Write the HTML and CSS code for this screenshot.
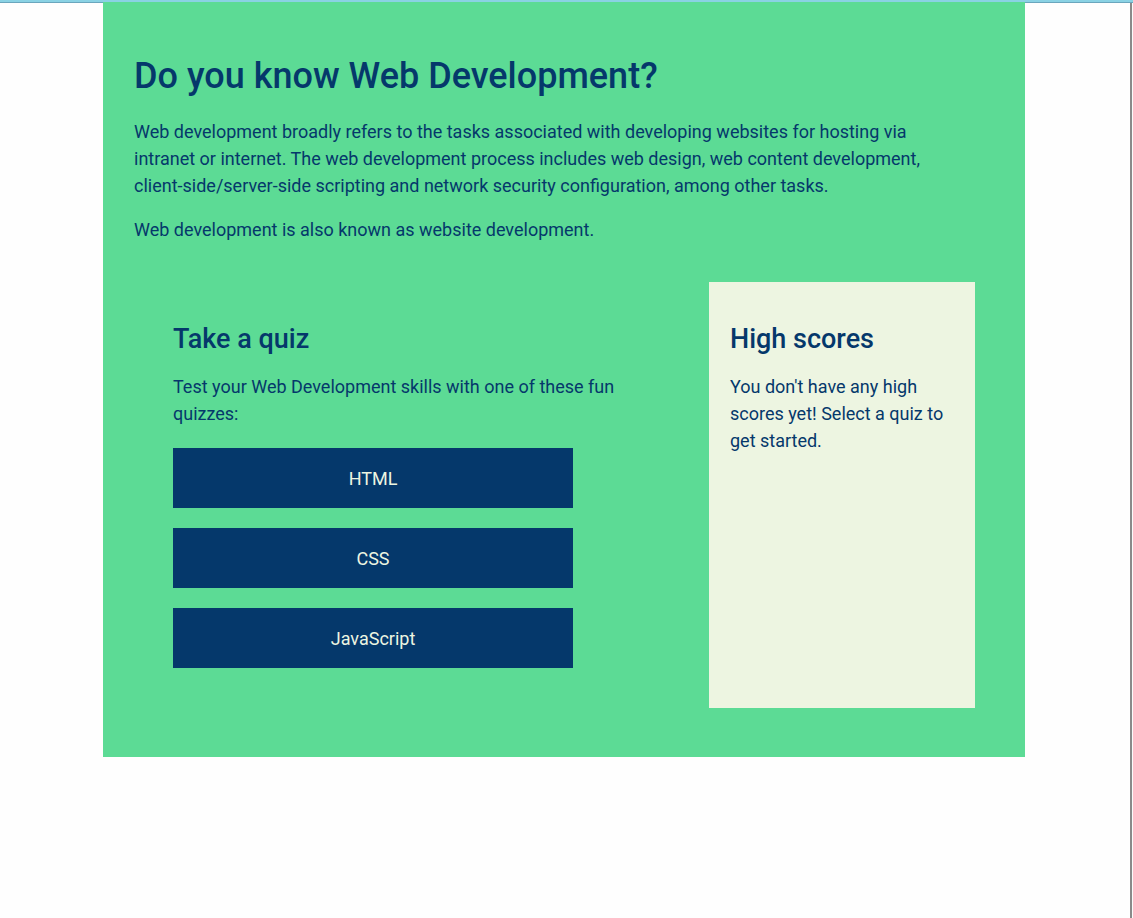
FILE: index.html
```html
<!DOCTYPE html>
<html lang="en">
<head>
<meta charset="utf-8">
<title>Do you know Web Development?</title>
<link rel="stylesheet" href="styles.css">
</head>
<body>
<div class="topbar"></div>
<div class="frame">
  <div class="viewport">
    <main class="card">
      <h1 class="title">Do you know Web Development?</h1>
      <p class="text intro">Web development broadly refers to the tasks associated with developing websites for hosting via intranet or internet. The web development process includes web design, web content development, client-side/server-side scripting and network security configuration, among other tasks.</p>
      <p class="text intro">Web development is also known as website development.</p>
      <div class="split">
        <section class="quiz">
          <h2 class="subtitle">Take a quiz</h2>
          <p class="text">Test your Web Development skills with one of these fun quizzes:</p>
          <div class="buttons">
            <button class="btn">HTML</button>
            <button class="btn">CSS</button>
            <button class="btn">JavaScript</button>
          </div>
        </section>
        <aside class="scores">
          <h2 class="subtitle">High scores</h2>
          <p class="text">You don't have any high scores yet! Select a quiz to get started.</p>
        </aside>
      </div>
    </main>
  </div>
  <div class="edge"></div>
</div>
</body>
</html>
```

FILE: styles.css
```css
* { box-sizing: border-box; }
html, body { margin: 0; padding: 0; background: #ffffff; }
body {
  font-family: Roboto, "Liberation Sans", sans-serif;
  color: #05386b;
  height: 918px;
  overflow: hidden;
}
.topbar {
  height: 3px;
  background: #8ad2e4;
  border-bottom: 1px solid #6aa6bd;
}
.frame {
  display: flex;
  height: 915px;
}
.viewport {
  width: 1130px;
  background: #fefefe;
}
.edge {
  width: 3px;
  border-left: 2px solid #8a8a8a;
  background: #fafafa;
}
.card {
  width: 922px;
  margin: -1px 0 0 103px;
  background: #5cdb95;
  padding: 26px 31px 49px 31px;
}
.title {
  font-size: 36px;
  font-weight: 500;
  margin: 27px 0 20px;
  line-height: 1.2;
}
.text {
  font-size: 18px;
  line-height: 27px;
  margin: 0 0 17px;
}
.intro {
  max-width: 835px;
}
.split {
  display: flex;
  margin-top: 39px;
  align-items: stretch;
}
.quiz {
  width: 575px;
  padding: 40px 40px 40px 39px;
}
.subtitle {
  font-size: 27px;
  font-weight: 500;
  margin: 1px 0 18px;
  line-height: 32px;
}
.buttons {
  display: flex;
  flex-direction: column;
  gap: 20px;
  margin-top: 21px;
}
.btn {
  width: 400px;
  height: 60px;
  border: 0;
  background: #05386b;
  color: #edf5e1;
  font-family: inherit;
  font-size: 18px;
}
.scores {
  width: 266px;
  background: #edf5e1;
  padding: 40px 20px 40px 21px;
}
```
